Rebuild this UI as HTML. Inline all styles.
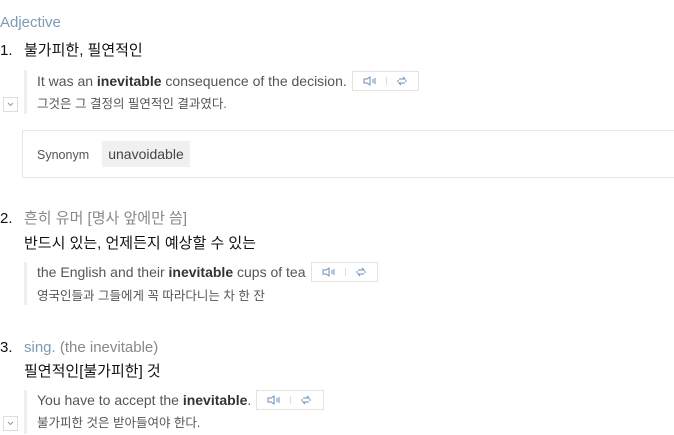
<!DOCTYPE html><html><head><meta charset="utf-8"><style>
body{margin:0;width:674px;height:434px;overflow:hidden;background:#fff;font-family:"Liberation Sans","Noto Sans CJK KR",sans-serif;position:relative}
.a{position:absolute;white-space:nowrap;line-height:20px}
.k{font-size:15px;color:#111}
.g{color:#888}
.ex{font-size:14px;color:#555}
.ex b{color:#333}
.kr{font-size:12.5px;color:#555}
.bar{position:absolute;left:24px;width:3px;background:#eee}
.btn{position:absolute;height:18px;border:1px solid #e3e3e3;background:#fff}
.btn svg{position:absolute;top:4px}
.btn i{position:absolute;left:33px;top:5px;width:1px;height:8px;background:#ddd}
.dd{position:absolute;left:3px;width:13px;height:13px;border:1px solid #ddd}
</style></head><body>
<div class="a" style="left:0;top:13px;font-size:15px;color:#7f9ab5">Adjective</div>
<div class="a k" style="left:0;top:41px">1.</div><div class="a k" style="left:24px;top:41px">불가피한, 필연적인</div>
<div class="bar" style="top:70px;height:44px"></div>
<div class="a ex" style="left:37px;top:71px">It was an <b>inevitable</b> consequence of the decision.</div>
<div class="btn" style="left:352px;top:71px;width:65px"><svg style="left:10px" width="14" height="10" viewBox="0 0 14 10" fill="none" stroke="#6a8fb5"><path d="M1 3h3l3-2v8l-3-2H1z"/><path d="M10 3v4M12 2v6"/></svg><i></i><svg style="left:43px" width="12" height="10" viewBox="0 0 12 10" fill="none" stroke="#6a8fb5"><path d="M3 3h6l-2-2M9 7H3l2 2M2 6V4M10 4v2"/></svg></div>
<div class="a kr" style="left:37px;top:94px">그것은 그 결정의 필연적인 결과였다.</div>
<div class="dd" style="top:97px"><svg width="13" height="13" viewBox="0 0 13 13"><path d="M4 5l2.5 2.5L9 5" fill="none" stroke="#999"/></svg></div>
<div style="position:absolute;left:22px;top:130px;width:660px;height:46px;border:1px solid #e6e6e6;border-radius:2px"></div>
<div class="a" style="left:37px;top:145px;font-size:12.5px;color:#555">Synonym</div>
<div class="a" style="left:102px;top:141px;width:88px;height:26px;line-height:26px;background:#f0f0f0;font-size:14px;color:#444;text-align:center">unavoidable</div>
<div class="a k" style="left:0;top:209px">2.</div><div class="a k g" style="left:24px;top:209px">흔히 유머 [명사 앞에만 씀]</div>
<div class="a k" style="left:24px;top:234px">반드시 있는, 언제든지 예상할 수 있는</div>
<div class="bar" style="top:262px;height:43px"></div>
<div class="a ex" style="left:37px;top:262px">the English and their <b>inevitable</b> cups of tea</div>
<div class="btn" style="left:311px;top:262px;width:65px"><svg style="left:10px" width="14" height="10" viewBox="0 0 14 10" fill="none" stroke="#6a8fb5"><path d="M1 3h3l3-2v8l-3-2H1z"/><path d="M10 3v4M12 2v6"/></svg><i></i><svg style="left:43px" width="12" height="10" viewBox="0 0 12 10" fill="none" stroke="#6a8fb5"><path d="M3 3h6l-2-2M9 7H3l2 2M2 6V4M10 4v2"/></svg></div>
<div class="a kr" style="left:37px;top:286px">영국인들과 그들에게 꼭 따라다니는 차 한 잔</div>
<div class="a k" style="left:0;top:338px">3.</div><div class="a k" style="left:24px;top:338px"><span style="color:#7f9ab5">sing.</span> <span class="g">(the inevitable)</span></div>
<div class="a k" style="left:24px;top:362px">필연적인[불가피한] 것</div>
<div class="bar" style="top:390px;height:44px"></div>
<div class="a ex" style="left:37px;top:390px">You have to accept the <b>inevitable</b>.</div>
<div class="btn" style="left:256px;top:390px;width:66px"><svg style="left:10px" width="14" height="10" viewBox="0 0 14 10" fill="none" stroke="#6a8fb5"><path d="M1 3h3l3-2v8l-3-2H1z"/><path d="M10 3v4M12 2v6"/></svg><i></i><svg style="left:43px" width="12" height="10" viewBox="0 0 12 10" fill="none" stroke="#6a8fb5"><path d="M3 3h6l-2-2M9 7H3l2 2M2 6V4M10 4v2"/></svg></div>
<div class="a kr" style="left:37px;top:413px">불가피한 것은 받아들여야 한다.</div>
<div class="dd" style="top:416px"><svg width="13" height="13" viewBox="0 0 13 13"><path d="M4 5l2.5 2.5L9 5" fill="none" stroke="#999"/></svg></div>
</body></html>
